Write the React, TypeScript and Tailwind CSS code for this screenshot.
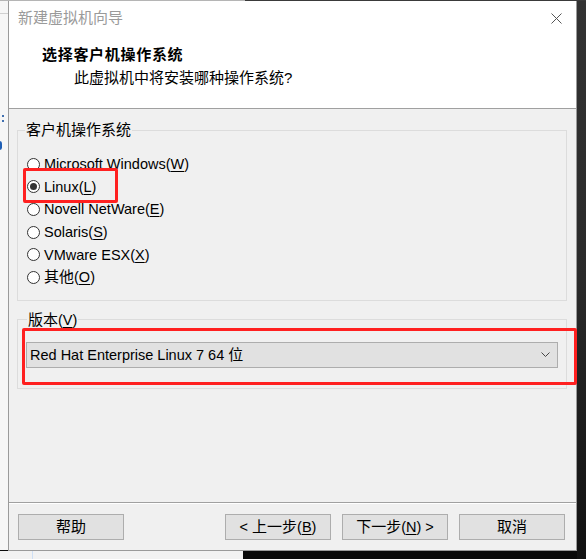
import React from "react";

const C = ({ children }: { children: React.ReactNode }) => (
  <span className="text-[15px]">{children}</span>
);

const U = ({ children }: { children: React.ReactNode }) => (
  <span className="underline underline-offset-[2px] decoration-[1px]">{children}</span>
);

function Radio({ checked, children }: { checked?: boolean; children: React.ReactNode }) {
  return (
    <div className="flex h-[22.6px] items-center pl-[9px]">
      <div className="flex h-[13px] w-[13px] items-center justify-center rounded-full border border-[#333333] bg-white">
        {checked && <div className="h-[7px] w-[7px] rounded-full bg-[#333333]" />}
      </div>
      <div className="ml-[4px] leading-[20px] text-black">{children}</div>
    </div>
  );
}

function Btn({ children }: { children: React.ReactNode }) {
  return (
    <div className="flex h-[26px] w-[106px] items-center justify-center border border-[#adadad] bg-[#e1e1e1] leading-[20px] text-black">
      <span className="whitespace-pre">{children}</span>
    </div>
  );
}

export default function App() {
  return (
    <div className="relative h-[559px] w-[586px] overflow-hidden bg-[#0a0a0a] font-[family-name:'Liberation_Sans','Noto_Sans_CJK_SC',sans-serif] text-[14.5px]">
      {/* desktop background pieces */}
      <div className="absolute left-0 top-0 h-[1px] w-[245px] bg-[#b5b5b5]" />
      <div className="absolute left-[245px] top-0 h-[1px] w-[341px] bg-[#3a3a3a]" />
      <div className="absolute left-0 top-[1px] h-[549px] w-[8px] bg-[#f6f6f6]">
        <div className="absolute left-0 top-[12px] h-[1px] w-[8px] bg-[#d0d0d0]" />
        <div className="absolute left-[2px] top-[114px] flex flex-col gap-[3px]">
          <div className="h-[2px] w-[2px] bg-[#4070b0]" />
          <div className="h-[2px] w-[2px] bg-[#4070b0]" />
        </div>
        <div className="absolute left-[-3px] top-[140px] h-[9px] w-[5px] rounded-full bg-[#1f5fb5]" />
      </div>
      <div className="absolute left-[577px] top-[1px] h-[558px] w-[9px] bg-gradient-to-b from-[#333333] via-[#2a2a2a] to-[#111111]" />
      <div className="absolute left-0 top-[551px] h-[8px] w-[243px] bg-[#f2f2f2]">
        <div className="absolute left-[32px] top-0 h-[8px] w-[1px] bg-[#cfe0f5]" />
      </div>

      {/* dialog window */}
      <div className="absolute left-[8px] top-[1px] flex h-[550px] w-[569px] flex-col border-x border-b border-[#9a9a9a] bg-[#f0f0f0]">
        {/* header */}
        <div className="flex h-[108px] flex-col border-b border-[#a0a0a0] bg-white">
          <div className="flex h-[34px] items-center justify-between pl-[9px] pr-[14px]">
            <span className="text-[15px] leading-[20px] text-[#9a9a9a]">新建虚拟机向导</span>
            <svg width="11" height="11" viewBox="0 0 11 11">
              <path d="M0.5 0.5 L10.5 10.5 M10.5 0.5 L0.5 10.5" stroke="#555" strokeWidth="1" fill="none" />
            </svg>
          </div>
          <div className="mt-[10px] pl-[33px] text-[15px] font-bold leading-[20px] tracking-[0.7px] text-black">
            选择客户机操作系统
          </div>
          <div className="mt-[3px] pl-[65px] text-[15px] leading-[20px] text-black">
            此虚拟机中将安装哪种操作系统?
          </div>
        </div>

        {/* body */}
        <div className="flex h-[393px] flex-col pl-[8px] pt-[11px]">
          <fieldset className="w-[550px] border border-[#dcdcdc] pb-[11px] pt-[13px]">
            <legend className="ml-[7px] px-[1px] leading-[20px] text-black">
              <C>客户机操作系统</C>
            </legend>
            <Radio>
              Microsoft Windows(<U>W</U>)
            </Radio>
            <Radio checked>
              Linux(<U>L</U>)
            </Radio>
            <Radio>
              Novell NetWare(<U>E</U>)
            </Radio>
            <Radio>
              Solaris(<U>S</U>)
            </Radio>
            <Radio>
              VMware ESX(<U>X</U>)
            </Radio>
            <Radio>
              <C>其他</C>(<U>O</U>)
            </Radio>
          </fieldset>

          <fieldset className="mt-[9px] w-[550px] border border-[#dcdcdc] px-[8px] pb-[20px] pt-[12px]">
            <legend className="ml-[1px] px-[1px] leading-[20px] text-black">
              <C>版本</C>(<U>V</U>)
            </legend>
            <div className="flex h-[26px] items-center justify-between border border-[#adadad] bg-[#e1e1e1] pl-[3px] pr-[7px] leading-[20px] text-black">
              <span>
                Red Hat Enterprise Linux 7 64 <C>位</C>
              </span>
              <svg width="9" height="6" viewBox="0 0 9 6">
                <path d="M0.5 0.5 L4.5 4.5 L8.5 0.5" stroke="#444" strokeWidth="1" fill="none" />
              </svg>
            </div>
          </fieldset>
        </div>

        {/* footer */}
        <div className="flex flex-1 flex-col border-t border-[#a0a0a0]">
          <div className="flex flex-1 items-start border-t border-white pl-[9px] pr-[11px] pt-[10px]">
            <Btn>
              <C>帮助</C>
            </Btn>
            <div className="flex-1" />
            <Btn>
              {"< "}
              <C>上一步</C>(<U>B</U>)
            </Btn>
            <div className="w-[11px]" />
            <Btn>
              <C>下一步</C>(<U>N</U>)
              {" >"}
            </Btn>
            <div className="w-[11px]" />
            <Btn>
              <C>取消</C>
            </Btn>
          </div>
        </div>
      </div>

      {/* red annotation boxes */}
      <div className="absolute left-[23px] top-[168px] h-[35px] w-[95px] rounded-[2px] border-[3px] border-[#ff2020]" />
      <div className="absolute left-[22px] top-[328px] h-[57px] w-[555px] rounded-[2px] border-[3px] border-[#ff2020]" />
    </div>
  );
}
